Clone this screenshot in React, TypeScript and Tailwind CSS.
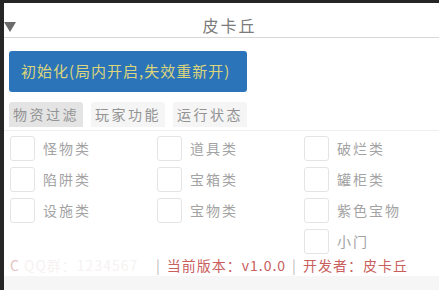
import React from 'react';

const ITEMS: string[][] = [
  ['怪物类', '道具类', '破烂类'],
  ['陷阱类', '宝箱类', '罐柜类'],
  ['设施类', '宝物类', '紫色宝物'],
  ['', '', '小门'],
];

const TABS = ['物资过滤', '玩家功能', '运行状态'];

const font = { fontFamily: '"Noto Sans CJK SC", "Noto Sans", sans-serif' };

function Check({ label }: { label: string }) {
  if (!label) return <div />;
  return (
    <div className="flex items-center gap-[8px]">
      <div className="w-[25px] h-[25px] border border-[#e4e4e4] rounded-[3px] bg-white" />
      <span className="text-[14px] text-[#a3a3a3] tracking-[2px]">{label}</span>
    </div>
  );
}

export default function App() {
  return (
    <div className="w-[439px] h-[290px] bg-[#262626] pl-[4px] pt-[3px] overflow-hidden" style={font}>
      <div className="bg-white h-full flex flex-col">
        {/* Header */}
        <div className="relative h-[35px] border-b border-[#d8d8d8] flex items-end justify-center pb-[2px] pl-[16px]">
          <svg className="absolute left-[0px] top-[19px]" width="12" height="10" viewBox="0 0 12 10">
            <polygon points="0,0 12,0 6,10" fill="#6b6b6b" />
          </svg>
          <span className="text-[16px] text-[#7a7a7a] tracking-[2px] leading-none mb-[2px]">皮卡丘</span>
        </div>

        {/* Init button */}
        <div className="pl-[5px] pt-[13px]">
          <button className="w-[238px] h-[41px] rounded-[3px] bg-[#2b74b9] text-[#dcd57c] text-[15px] tracking-[1px] flex items-center pl-[12px]">
            初始化(局内开启,失效重新开)
          </button>
        </div>

        {/* Tabs */}
        <div className="mt-[10px] pl-[5px] flex gap-[8px] border-b border-[#efefef] pb-[3px]">
          {TABS.map((t, i) => (
            <div
              key={t}
              className={`h-[25px] px-[4px] flex items-center text-[14px] tracking-[2.5px] rounded-t-[3px] text-[#939393] ${
                i === 0 ? 'bg-[#e4e4e4]' : 'bg-[#f5f5f5]'
              }`}
            >
              {t}
            </div>
          ))}
        </div>

        {/* Filters */}
        <div className="pl-[6px] pt-[5px] flex flex-col gap-[6px]">
          {ITEMS.map((row, r) => (
            <div key={r} className="grid grid-cols-[147px_147px_147px] h-[25px]">
              {row.map((label, c) => (
                <Check key={c} label={label} />
              ))}
            </div>
          ))}
        </div>

        {/* Footer */}
        <div className="pl-[6px] pt-[1px] h-[22px] flex items-center text-[14px] text-[#c9605d] tracking-[1px] whitespace-nowrap">
          <span className="text-[#e5c4c4]">C</span>
          <span className="text-[#f6f2f2] w-[130px] inline-block">&nbsp;QQ群：1234567</span>
          <span className="mx-[6px] text-[#b8b8b8]">|</span>
          <span>当前版本：v1.0.0</span>
          <span className="mx-[6px] text-[#b8b8b8]">|</span>
          <span>开发者：皮卡丘</span>
        </div>
        <div className="flex-1 bg-[#f6f6f6]" />
      </div>
    </div>
  );
}
